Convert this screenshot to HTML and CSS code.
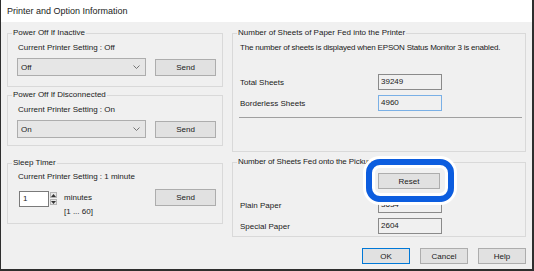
FILE: index.html
```html
<html>
<head>
    <title>Printer and Option Information</title>
    <link rel="stylesheet" href="styles.css">
</head>
<body>
    <div class="window">
        <div class="titlebar">Printer and Option Information</div>
        <div class="content">
            <div class="column">
                <fieldset class="group inactive">
                    <legend>Power Off If Inactive</legend>
                    <div class="group-body">
                        <p class="setting">Current Printer Setting : Off</p>
                        <div class="control-row">
                            <div class="combo">
                                <span>Off</span>
                                <svg width="7" height="4" viewBox="0 0 7 4"><path d="M0.5 0.5 L3.5 3.5 L6.5 0.5" fill="none" stroke="#666" stroke-width="0.9"/></svg>
                            </div>
                            <button class="btn">Send</button>
                        </div>
                    </div>
                </fieldset>
                <fieldset class="group disconnected">
                    <legend>Power Off If Disconnected</legend>
                    <div class="group-body">
                        <p class="setting">Current Printer Setting : On</p>
                        <div class="control-row">
                            <div class="combo">
                                <span>On</span>
                                <svg width="7" height="4" viewBox="0 0 7 4"><path d="M0.5 0.5 L3.5 3.5 L6.5 0.5" fill="none" stroke="#666" stroke-width="0.9"/></svg>
                            </div>
                            <button class="btn">Send</button>
                        </div>
                    </div>
                </fieldset>
                <fieldset class="group sleep">
                    <legend>Sleep Timer</legend>
                    <div class="group-body">
                        <p class="setting">Current Printer Setting : 1 minute</p>
                        <div class="control-row timer-row">
                            <div class="timer">
                                <div class="spin">
                                    <span class="spin-box">1</span>
                                    <span class="spin-arrows">
                                        <span class="arrow"><svg width="5" height="3" viewBox="0 0 5 3"><path d="M0 3 L2.5 0 L5 3 Z" fill="#333"/></svg></span>
                                        <span class="arrow"><svg width="5" height="3" viewBox="0 0 5 3"><path d="M0 0 L2.5 3 L5 0 Z" fill="#333"/></svg></span>
                                    </span>
                                </div>
                                <div class="units">
                                    <span>minutes</span>
                                    <span>[1 ... 60]</span>
                                </div>
                            </div>
                            <button class="btn">Send</button>
                        </div>
                    </div>
                </fieldset>
            </div>
            <div class="column">
                <fieldset class="group fed">
                    <legend>Number of Sheets of Paper Fed into the Printer</legend>
                    <div class="group-body wide">
                        <p class="setting note">The number of sheets is displayed when EPSON Status Monitor 3 is enabled.</p>
                        <div class="count-row first">
                            <span class="count-label">Total Sheets</span>
                            <span class="count-box">39249</span>
                        </div>
                        <div class="count-row">
                            <span class="count-label">Borderless Sheets</span>
                            <span class="count-box focused">4960</span>
                        </div>
                        <hr class="divider">
                    </div>
                </fieldset>
                <fieldset class="group pickup">
                    <legend>Number of Sheets Fed onto the Pickup</legend>
                    <div class="group-body wide">
                        <div class="reset-row">
                            <button class="btn reset">Reset</button>
                        </div>
                        <div class="count-row plain">
                            <span class="count-label">Plain Paper</span>
                            <span class="count-box">3634</span>
                        </div>
                        <div class="count-row">
                            <span class="count-label">Special Paper</span>
                            <span class="count-box">2604</span>
                        </div>
                    </div>
                    <div class="highlight"></div>
                </fieldset>
            </div>
        </div>
        <div class="footer">
            <button class="btn dialog default">OK</button>
            <button class="btn dialog">Cancel</button>
            <button class="btn dialog">Help</button>
        </div>
    </div>
</body>
</html>
```

FILE: styles.css
```css
body {
    margin: 0;
    font-family: "Liberation Sans", Arial, sans-serif;
    font-size: 8px;
    color: #1a1a1a;
}

.window {
    width: 534px;
    height: 271px;
    box-sizing: border-box;
    background: #f0f0f0;
    border-left: 1px solid #2e2e2e;
    border-right: 2px solid #2e2e2e;
    border-bottom: 2px solid #2e2e2e;
}

.titlebar {
    height: 22px;
    line-height: 23px;
    background: #fff;
    font-size: 9px;
    padding-left: 6px;
    color: #222;
}

.content {
    display: grid;
    grid-template-columns: 216px 294px;
    column-gap: 9px;
    padding: 6px 6px 0 6px;
}

.group {
    margin: 0;
    padding: 0;
    min-width: 0;
    box-sizing: border-box;
    border: 1px solid #d9d9d9;
}

.group legend {
    margin-left: 4px;
    padding: 0 1px;
    line-height: 10px;
    font-size: 8px;
}

.pickup legend {
    letter-spacing: -0.1px;
}

.group-body {
    padding: 5px 6px 0 9px;
}

.group-body.wide {
    padding: 5px 3px 0 7px;
}

.setting {
    margin: 0 0 0 1px;
    line-height: 10px;
}

.wide .setting {
    margin-left: 0;
}

.note {
    letter-spacing: -0.2px;
}

.inactive { height: 59px; }
.disconnected { height: 56px; margin-top: 3px; }
.sleep { height: 66px; margin-top: 12px; }
.fed { height: 124px; }
.pickup { height: 80px; margin-top: 5px; position: relative; }

.sleep .group-body { padding-top: 4px; }

.control-row {
    display: grid;
    grid-template-columns: 129px 61px;
    column-gap: 9px;
    align-items: center;
    margin-top: 5px;
}

.combo {
    height: 18px;
    box-sizing: border-box;
    border: 1px solid #adadad;
    background: #e6e6e6;
    display: flex;
    align-items: center;
    justify-content: space-between;
    padding: 0 5px 0 3px;
}

.btn {
    height: 17px;
    padding: 0;
    box-sizing: border-box;
    border: 1px solid #adadad;
    background: #e1e1e1;
    font-family: inherit;
    font-size: 8px;
    color: #1a1a1a;
}

.timer-row {
    margin-top: 7px;
    align-items: start;
}

.timer {
    display: flex;
    align-items: flex-start;
    padding: 2px 0 0 2px;
}

.spin {
    display: flex;
    height: 16px;
}

.spin-box {
    width: 30px;
    box-sizing: border-box;
    border: 1px solid #7a7a7a;
    background: #fff;
    line-height: 14px;
    padding-left: 3px;
}

.spin-arrows {
    display: flex;
    flex-direction: column;
    gap: 1px;
    margin-left: 1px;
    padding-top: 1px;
}

.arrow {
    width: 7px;
    height: 6px;
    box-sizing: border-box;
    border: 1px solid #b5b5b5;
    background: #e6e6e6;
    display: flex;
    align-items: center;
    justify-content: center;
}

.units {
    display: flex;
    flex-direction: column;
    gap: 4px;
    margin-left: 7px;
    padding-top: 2px;
    line-height: 10px;
}

.count-row {
    display: flex;
    align-items: center;
    margin-top: 5px;
}

.count-row.first { margin-top: 21px; }
.count-row.plain { margin-top: 8px; }

.count-label {
    width: 138px;
}

.count-box {
    width: 64px;
    height: 16px;
    box-sizing: border-box;
    border: 1px solid #8a8a8a;
    background: #f0f0f0;
    line-height: 14px;
    padding-left: 2px;
}

.count-box.focused {
    border-color: #7ab0e6;
}

.divider {
    margin: 6px 0 0 -1px;
    border: none;
    border-top: 1px solid #a0a0a0;
}

.reset-row {
    padding-left: 138px;
    margin-top: 1px;
}

.reset {
    width: 62px;
    height: 16px;
}

/* annotation ring drawn over the Reset button */
.highlight {
    position: absolute;
    left: 133px;
    top: -8px;
    width: 88px;
    height: 43px;
    box-sizing: border-box;
    border: 6px solid #0c5ddf;
    border-radius: 14px;
    box-shadow: 0 0 0 3px #fff, inset 0 0 0 3px #fff;
}

.footer {
    display: flex;
    justify-content: flex-end;
    gap: 10px;
    padding: 11px 6px 0 0;
}

.dialog {
    width: 48px;
    height: 16px;
}

.dialog.default {
    border-color: #0078d7;
}
```
